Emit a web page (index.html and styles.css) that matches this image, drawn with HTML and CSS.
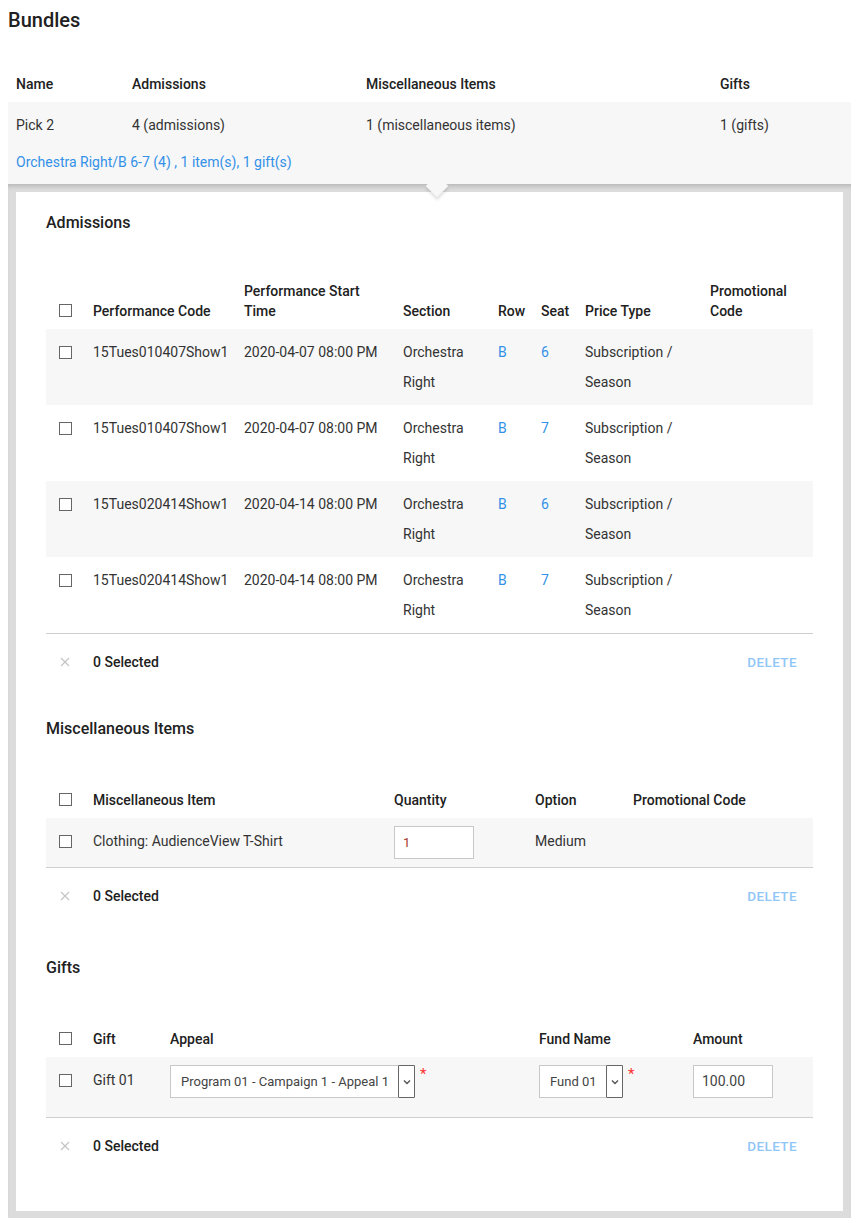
FILE: index.html
```html
<!DOCTYPE html>
<html>
<head>
<meta charset="utf-8">
<link rel="stylesheet" href="styles.css">
</head>
<body>
<h1 class="page-title">Bundles</h1>
<table class="bundles">
  <colgroup><col class="bc1"><col class="bc2"><col class="bc3"><col class="bc4"></colgroup>
  <thead>
    <tr><th>Name</th><th>Admissions</th><th>Miscellaneous Items</th><th>Gifts</th></tr>
  </thead>
  <tbody>
    <tr class="b-row"><td>Pick 2</td><td>4 (admissions)</td><td>1 (miscellaneous items)</td><td>1 (gifts)</td></tr>
    <tr class="b-row b-link-row"><td colspan="4"><a class="link">Orchestra Right/B 6-7 (4) , 1 item(s), 1 gift(s)</a></td></tr>
  </tbody>
</table>
<div class="panel">
  <span class="pointer"></span>
  <div class="panel-inner">
    <section class="sec sec-first">
      <h2 class="sec-title sec-title-adm">Admissions</h2>
      <table class="grid">
        <colgroup>
          <col style="width:47px"><col style="width:151px"><col style="width:159px"><col style="width:95px"><col style="width:43px"><col style="width:44px"><col style="width:125px"><col style="width:103px">
        </colgroup>
        <thead>
          <tr><th class="cb"><span class="box"></span></th><th>Performance Code</th><th>Performance Start Time</th><th>Section</th><th>Row</th><th>Seat</th><th>Price Type</th><th>Promotional Code</th></tr>
        </thead>
        <tbody>
          <tr class="odd"><td class="cb"><span class="box"></span></td><td>15Tues010407Show1</td><td>2020-04-07 08:00 PM</td><td>Orchestra Right</td><td><a class="link">B</a></td><td><a class="link">6</a></td><td>Subscription / Season</td><td></td></tr>
          <tr><td class="cb"><span class="box"></span></td><td>15Tues010407Show1</td><td>2020-04-07 08:00 PM</td><td>Orchestra Right</td><td><a class="link">B</a></td><td><a class="link">7</a></td><td>Subscription / Season</td><td></td></tr>
          <tr class="odd"><td class="cb"><span class="box"></span></td><td>15Tues020414Show1</td><td>2020-04-14 08:00 PM</td><td>Orchestra Right</td><td><a class="link">B</a></td><td><a class="link">6</a></td><td>Subscription / Season</td><td></td></tr>
          <tr><td class="cb"><span class="box"></span></td><td>15Tues020414Show1</td><td>2020-04-14 08:00 PM</td><td>Orchestra Right</td><td><a class="link">B</a></td><td><a class="link">7</a></td><td>Subscription / Season</td><td></td></tr>
        </tbody>
      </table>
      <div class="foot">
        <svg class="x" width="10" height="10" viewBox="0 0 10 10"><path d="M1 1L9 9M9 1L1 9" stroke="#c4c4c4" stroke-width="1.2"/></svg>
        <span class="count">0 Selected</span>
        <span class="del">DELETE</span>
      </div>
    </section>

    <section class="sec sec-misc">
      <h2 class="sec-title">Miscellaneous Items</h2>
      <table class="grid">
        <colgroup>
          <col style="width:47px"><col style="width:301px"><col style="width:141px"><col style="width:98px"><col style="width:180px">
        </colgroup>
        <thead>
          <tr><th class="cb"><span class="box"></span></th><th>Miscellaneous Item</th><th>Quantity</th><th>Option</th><th>Promotional Code</th></tr>
        </thead>
        <tbody>
          <tr class="odd"><td class="cb"><span class="box"></span></td><td>Clothing: AudienceView T-Shirt</td><td><span class="input qty">1</span></td><td>Medium</td><td></td></tr>
        </tbody>
      </table>
      <div class="foot">
        <svg class="x" width="10" height="10" viewBox="0 0 10 10"><path d="M1 1L9 9M9 1L1 9" stroke="#c4c4c4" stroke-width="1.2"/></svg>
        <span class="count">0 Selected</span>
        <span class="del">DELETE</span>
      </div>
    </section>

    <section class="sec sec-gifts">
      <h2 class="sec-title">Gifts</h2>
      <table class="grid">
        <colgroup>
          <col style="width:47px"><col style="width:77px"><col style="width:369px"><col style="width:154px"><col style="width:120px">
        </colgroup>
        <thead>
          <tr><th class="cb"><span class="box"></span></th><th>Gift</th><th>Appeal</th><th>Fund Name</th><th>Amount</th></tr>
        </thead>
        <tbody>
          <tr class="odd gift-row">
            <td class="cb"><span class="box"></span></td>
            <td>Gift 01</td>
            <td><span class="select appeal"><span class="sel-text">Program 01 - Campaign 1 - Appeal 1</span><span class="sel-btn"><svg width="8" height="6" viewBox="0 0 8 6"><path d="M1 1.5L4 4.5L7 1.5" fill="none" stroke="#555" stroke-width="1.4"/></svg></span></span><span class="req">*</span></td>
            <td><span class="select fund"><span class="sel-text">Fund 01</span><span class="sel-btn"><svg width="8" height="6" viewBox="0 0 8 6"><path d="M1 1.5L4 4.5L7 1.5" fill="none" stroke="#555" stroke-width="1.4"/></svg></span></span><span class="req">*</span></td>
            <td><span class="input amount">100.00</span></td>
          </tr>
        </tbody>
      </table>
      <div class="foot">
        <svg class="x" width="10" height="10" viewBox="0 0 10 10"><path d="M1 1L9 9M9 1L1 9" stroke="#c4c4c4" stroke-width="1.2"/></svg>
        <span class="count">0 Selected</span>
        <span class="del">DELETE</span>
      </div>
    </section>
  </div>
</div>
</body>
</html>
```

FILE: styles.css
```css
html, body {
  margin: 0;
  padding: 0;
  background: #fff;
}
body {
  padding: 8px 7px 0 8px;
  font-family: Roboto, "Liberation Sans", Arial, sans-serif;
  font-size: 14px;
  color: #333;
}
.page-title {
  margin: 0;
  font-size: 20px;
  line-height: 24px;
  font-weight: 500;
  color: #212121;
}
.bundles {
  margin-top: 34px;
  width: 843px;
  border-collapse: collapse;
  table-layout: fixed;
}
.bc1 { width: 116px; }
.bc2 { width: 234px; }
.bc3 { width: 354px; }
.bc4 { width: 139px; }
.bundles th {
  text-align: left;
  font-weight: 500;
  color: #212121;
  line-height: 20px;
  padding: 8px 0 8px 8px;
}
.bundles td {
  line-height: 30px;
  padding: 8px 0 0 8px;
  color: #333;
}
.b-row { background: #f7f7f7; }
.b-link-row td { padding: 7px 0 7px 8px; }
.link {
  color: #3391e8;
  text-decoration: none;
}
.panel {
  position: relative;
  width: 827px;
  background: #dcdcdc;
  padding: 8px 8px 7px 8px;
  box-shadow: inset 0 5px 5px -3px rgba(0,0,0,0.18);
}
.pointer {
  position: absolute;
  left: 421px;
  top: -6px;
  width: 16px;
  height: 16px;
  background: #f7f7f7;
  transform: rotate(45deg);
  box-shadow: 2px 2px 3px rgba(0,0,0,0.12);
  z-index: 2;
}
.panel-inner {
  position: relative;
  background: #fff;
  padding: 21px 30px 37px 30px;
}
.sec-misc { margin-top: 29px; }
.sec-gifts { margin-top: 34px; }
.sec-title {
  margin: 0 0 43px 0;
  font-size: 16px;
  line-height: 20px;
  font-weight: 500;
  color: #212121;
}
.sec-title-adm { margin-bottom: 40px; }
.grid {
  width: 767px;
  border-collapse: collapse;
  table-layout: fixed;
  border-bottom: 1px solid #cfcfcf;
}
.grid th {
  text-align: left;
  vertical-align: bottom;
  font-weight: 500;
  color: #212121;
  line-height: 20px;
  padding: 8px 12px 8px 0;
}
.grid td {
  vertical-align: top;
  line-height: 30px;
  padding: 8px 8px 8px 0;
  color: #333;
}
.grid .cb { padding-left: 13px; padding-right: 0; }
.grid tr.odd { background: #f7f7f7; }
.box {
  display: inline-block;
  width: 11px;
  height: 11px;
  border: 1px solid #666;
  background: #fff;
  vertical-align: middle;
  position: relative;
  top: -1px;
}
.grid th .box { top: -2px; }
.input {
  display: block;
  box-sizing: border-box;
  height: 33px;
  border: 1px solid #c8c8c8;
  background: #fff;
  line-height: 31px;
  padding-left: 8px;
}
.qty { width: 80px; color: #a33a2a; font-size: 13px; }
.amount { width: 80px; color: #444; font-size: 14px; }
.select {
  display: inline-flex;
  box-sizing: border-box;
  height: 33px;
  border: 1px solid #c8c8c8;
  background: #fff;
  vertical-align: top;
  font-size: 13px;
  color: #444;
}
.sel-text {
  flex: 1;
  line-height: 31px;
  padding-left: 10px;
  white-space: nowrap;
}
.sel-btn {
  box-sizing: border-box;
  width: 17px;
  margin: -1px -1px -1px 0;
  border: 1px solid #666;
  border-radius: 1px;
  display: flex;
  align-items: center;
  justify-content: center;
  background: #fff;
}
.appeal { width: 245px; }
.fund { width: 84px; }
.req {
  color: #f33;
  font-size: 15px;
  line-height: 14px;
  vertical-align: top;
  margin-left: 5px;
  position: relative;
  top: 2px;
}
.gift-row td { padding-bottom: 19px; }
.foot {
  display: flex;
  align-items: center;
  height: 56px;
  padding: 0 16px 0 14px;
}
.x { margin-right: 23px; }
.count {
  font-weight: 500;
  color: #212121;
}
.del {
  margin-left: auto;
  font-weight: 500;
  font-size: 13.5px;
  color: #90c6f7;
  letter-spacing: 0.4px;
}
```
